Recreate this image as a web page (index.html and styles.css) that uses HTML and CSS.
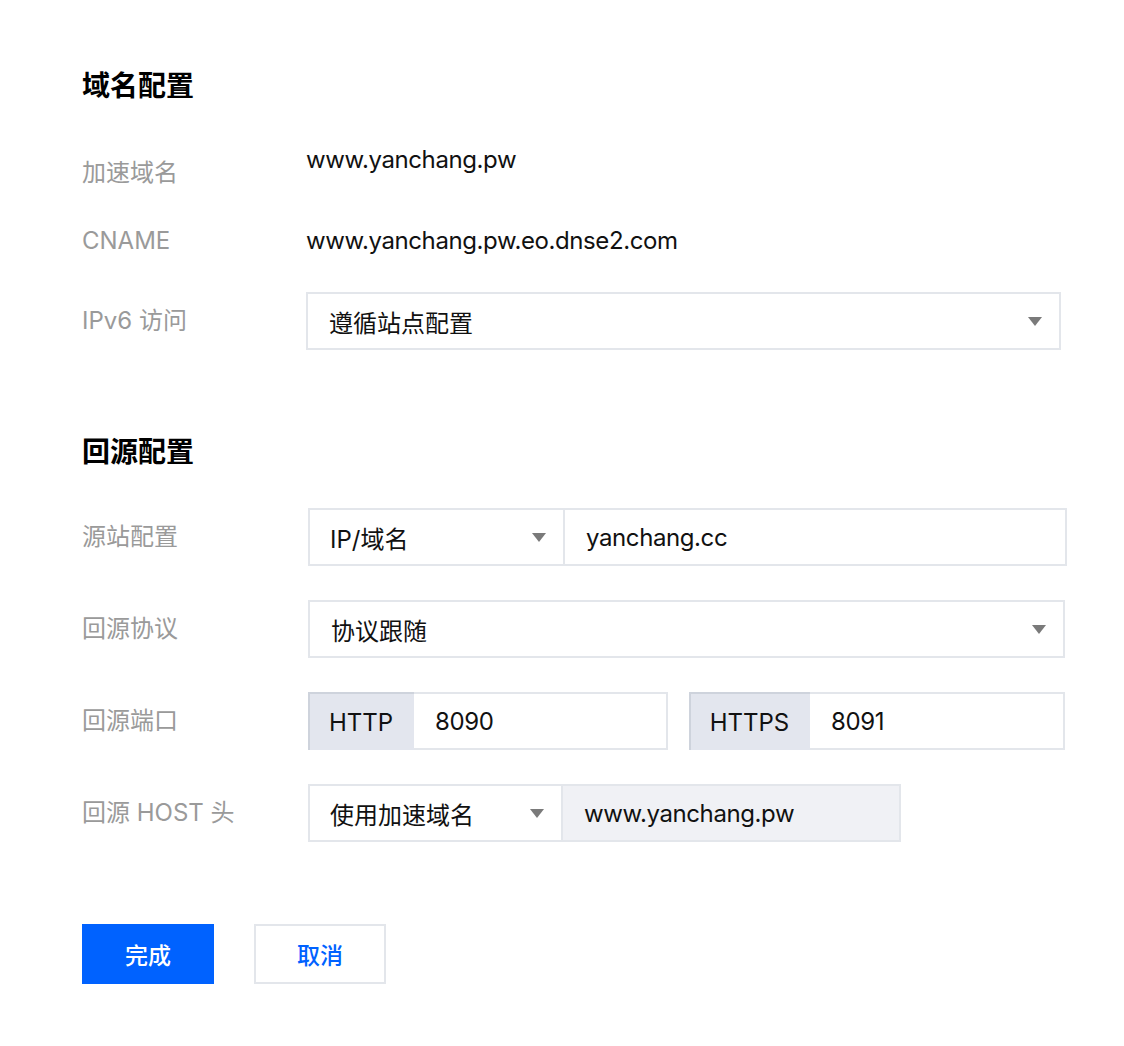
FILE: index.html
```html
<!DOCTYPE html>
<html lang="zh-CN">
<head>
<meta charset="utf-8">
<title>域名配置</title>
<link rel="stylesheet" href="styles.css">
</head>
<body>
<main class="page">
  <section class="section">
    <h2 class="section-title">域名配置</h2>

    <div class="info-row info-row--first">
      <div class="label label--low">加速域名</div>
      <div class="value">www.yanchang.pw</div>
    </div>

    <div class="info-row info-row--cname">
      <div class="label">CNAME</div>
      <div class="value">www.yanchang.pw.eo.dnse2.com</div>
    </div>

    <div class="form-row form-row--ipv6">
      <div class="label">IPv6 访问</div>
      <div class="select select--ipv6">
        <span class="select-text">遵循站点配置</span>
        <span class="caret"></span>
      </div>
    </div>
  </section>

  <section class="section section--origin">
    <h2 class="section-title">回源配置</h2>

    <div class="form-row form-row--first">
      <div class="label">源站配置</div>
      <div class="group group--origin">
        <div class="select select--inner select--origin">
          <span class="select-text">IP/域名</span>
          <span class="caret"></span>
        </div>
        <div class="input">yanchang.cc</div>
      </div>
    </div>

    <div class="form-row">
      <div class="label">回源协议</div>
      <div class="select select--protocol">
        <span class="select-text">协议跟随</span>
        <span class="caret"></span>
      </div>
    </div>

    <div class="form-row">
      <div class="label">回源端口</div>
      <div class="ports">
        <div class="group group--http">
          <div class="addon addon--http">HTTP</div>
          <div class="input">8090</div>
        </div>
        <div class="group group--https">
          <div class="addon addon--https">HTTPS</div>
          <div class="input">8091</div>
        </div>
      </div>
    </div>

    <div class="form-row">
      <div class="label">回源 HOST 头</div>
      <div class="group group--host">
        <div class="select select--inner select--host">
          <span class="select-text">使用加速域名</span>
          <span class="caret"></span>
        </div>
        <div class="input input--disabled">www.yanchang.pw</div>
      </div>
    </div>
  </section>

  <div class="actions">
    <button class="btn btn--primary" type="button">完成</button>
    <button class="btn btn--default" type="button">取消</button>
  </div>
</main>
</body>
</html>
```

FILE: styles.css
```css
* {
  box-sizing: border-box;
}

html,
body {
  margin: 0;
  padding: 0;
  background: #ffffff;
}

body {
  font-family: "Inter", "Noto Sans CJK SC", sans-serif;
  font-size: 24px;
  color: #111111;
}

.page {
  padding: 66px 0 0 82px;
}

.section-title {
  margin: 0;
  font-size: 28px;
  line-height: 40px;
  font-weight: 700;
  color: #000000;
}

/* read-only rows */
.info-row {
  display: flex;
  align-items: flex-start;
}

.info-row--first {
  margin-top: 38px;
}

.info-row--cname {
  margin-top: 36px;
}

.label {
  flex: 0 0 224px;
  color: #9a9a9a;
  line-height: 32px;
}

.label--low {
  padding-top: 13px;
}

.value {
  line-height: 32px;
  color: #111111;
  letter-spacing: -0.4px;
}

/* form rows */
.form-row {
  display: flex;
  align-items: center;
  margin-top: 34px;
}

.form-row--ipv6 {
  margin-top: 35px;
}

.form-row--first {
  margin-top: 36px;
}

.section--origin {
  margin-top: 82px;
}

.section--origin .label {
  flex-basis: 226px;
}

.select,
.group,
.addon,
.input {
  height: 58px;
}

.select {
  display: flex;
  align-items: center;
  justify-content: space-between;
  border: 2px solid #e3e6eb;
  padding: 0 17px 0 21px;
  background: #ffffff;
  color: #111111;
}

.select-text {
  padding-top: 1px;
}

.select--ipv6 {
  width: 755px;
}

.select--protocol {
  width: 757px;
}

.caret {
  width: 0;
  height: 0;
  border-left: 7px solid transparent;
  border-right: 7px solid transparent;
  border-top: 9px solid #7a7a7a;
}

.group {
  display: flex;
  border: 2px solid #e3e6eb;
}

.group .select--inner {
  height: 54px;
  border: none;
  border-right: 2px solid #e3e6eb;
  padding: 0 17px 0 20px;
}

.group--origin {
  width: 759px;
}

.select--origin {
  flex: 0 0 255px;
}

.group--host {
  width: 593px;
}

.select--host {
  flex: 0 0 253px;
}

.input {
  flex: 1;
  height: 54px;
  display: flex;
  align-items: center;
  padding-left: 21px;
  color: #111111;
  letter-spacing: -0.4px;
}

.input--disabled {
  background: #f0f1f5;
}

.ports {
  display: flex;
  gap: 21px;
}

.group--http {
  width: 360px;
}

.group--https {
  width: 376px;
}

.addon {
  display: flex;
  align-items: center;
  justify-content: center;
  background: #e3e6ee;
  color: #111111;
  padding-top: 3px;
  box-shadow: inset 2px 2px 0 #ced3dc;
  margin: -2px 0 -2px -2px;
  height: 58px;
}

.addon--http {
  flex: 0 0 106px;
}

.addon--https {
  flex: 0 0 121px;
}

/* footer buttons */
.actions {
  display: flex;
  gap: 40px;
  margin-top: 82px;
}

.btn {
  width: 132px;
  height: 60px;
  font-family: inherit;
  font-size: 23px;
  font-weight: 500;
  cursor: pointer;
}

.btn--primary {
  background: #0062ff;
  border: none;
  color: #ffffff;
}

.btn--default {
  background: #ffffff;
  border: 2px solid #e3e6eb;
  color: #0062ff;
}
```
